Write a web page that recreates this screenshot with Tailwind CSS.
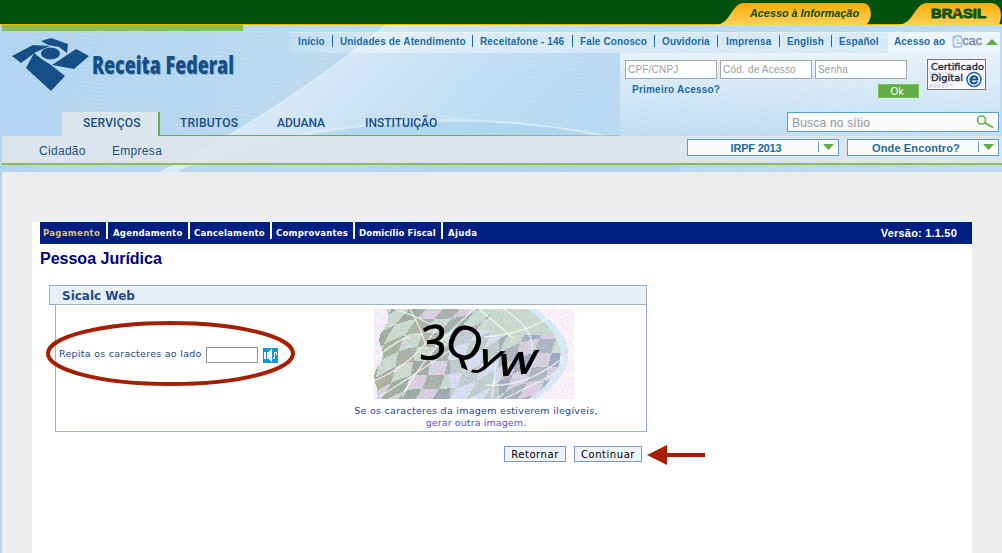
<!DOCTYPE html>
<html lang="pt-BR">
<head>
<meta charset="utf-8">
<title>Receita Federal - Sicalc Web</title>
<script src="https://cdn.jsdelivr.net/npm/@tailwindcss/browser@4"></script>
</head>
<body class="w-[1002px] h-[553px] overflow-hidden bg-[#b6d7ef] font-['Liberation_Sans',Arial,sans-serif]">
<div class="relative isolate flex flex-col w-[1002px] h-[553px]">

<!-- sky background with light curves -->
<svg class="absolute left-0 top-[25px] -z-10" width="1002" height="528" viewBox="0 25 1002 528">
  <defs>
    <linearGradient id="sky" x1="0" x2="1" y1="0" y2="0"><stop offset="0" stop-color="#b0d4f0"/><stop offset=".3" stop-color="#bad9f0"/><stop offset=".55" stop-color="#b6d8f0"/><stop offset="1" stop-color="#bcdaf1"/></linearGradient>
    <linearGradient id="ray" gradientUnits="userSpaceOnUse" x1="270" y1="100" x2="420" y2="260"><stop offset="0" stop-color="#fff" stop-opacity=".42"/><stop offset=".5" stop-color="#fff" stop-opacity=".16"/><stop offset="1" stop-color="#fff" stop-opacity="0"/></linearGradient>
    <pattern id="wave" width="40" height="4" patternUnits="userSpaceOnUse" patternTransform="rotate(6)"><path d="M0 1H40" stroke="#fff" stroke-opacity=".1"/></pattern>
  </defs>
  <rect y="25" width="1002" height="528" fill="url(#sky)"/>
  <rect y="25" width="1002" height="147" fill="url(#wave)"/>
  <path d="M161 172C250 128 330 72 386 25H700V172Z" fill="url(#ray)"/>
  <path d="M161 172C250 128 330 72 386 25" stroke="#e6f3fc" stroke-width="1.500" stroke-opacity=".7" fill="none"/>
  <path d="M165 172C270 130 400 118 480 121C560 124 620 138 680 155" stroke="#dceefa" stroke-width="2.500" stroke-opacity=".7" fill="none"/>
  <path d="M180 170C270 132 400 120 480 122C560 125 620 139 680 156V172H180Z" fill="#add3ee" fill-opacity=".7"/>
</svg>

<div class="flex justify-end h-[25px] bg-[#00520e] border-b border-[#fdb30a]">
  <svg width="290" height="25" viewBox="712 0 290 25">
    <defs><linearGradient id="gold" x1="0" x2="0" y1="0" y2="1"><stop offset="0" stop-color="#fdac04"/><stop offset="1" stop-color="#ffd05a"/></linearGradient></defs>
    <path d="M716 25C728 23 729 14 735 8C739 3 742 3 746 3H862C873 3 873 19 866 25Z" fill="url(#gold)"/>
    <path d="M898 25C911 23 912 14 918 8C922 3 925 3 929 3H990C1003 3 1002 17 999 25Z" fill="url(#gold)"/>
    <text x="750" y="17" textLength="109" lengthAdjust="spacingAndGlyphs" font-size="11.5" font-weight="bold" font-style="italic" fill="#0b4a10">Acesso à Informação</text>
    <text x="931" y="18.3" textLength="55" lengthAdjust="spacingAndGlyphs" font-size="13" font-weight="bold" fill="#0b5313" stroke="#0b5313" stroke-width=".9">BRASIL</text>
    <circle cx="957" cy="12.500" r="2" fill="#d8661e"/>
  </svg>
</div>

<header class="flex flex-col h-[147px] pl-[2px]">
  <div class="flex justify-between h-[28px] pr-[2px]">
    <div class="w-[241px] h-[6px] bg-[#8abd4c]"></div>
    <nav class="flex mt-[7px] h-[21px] pt-[2px] bg-linear-to-r from-white/10 via-white/40 via-15% to-white/45 border-t border-white/30 text-[10px] leading-[13px] tracking-[0.12px] font-bold text-[#1c6ca3] whitespace-nowrap">
      <span class="w-[42px] h-[12px] pl-[8px]">Início</span>
      <span class="w-[140px] h-[12px] border-l border-[#1c6ca3] pl-[7px]">Unidades de Atendimento</span>
      <span class="w-[100px] h-[12px] border-l border-[#1c6ca3] pl-[7px]">Receitafone - 146</span>
      <span class="w-[82px] h-[12px] border-l border-[#1c6ca3] pl-[7px]">Fale Conosco</span>
      <span class="w-[63px] h-[12px] border-l border-[#1c6ca3] pl-[7px]">Ouvidoria</span>
      <span class="w-[62px] h-[12px] border-l border-[#1c6ca3] pl-[8px]">Imprensa</span>
      <span class="w-[52px] h-[12px] border-l border-[#1c6ca3] pl-[7px]">English</span>
      <span class="w-[57px] h-[12px] border-l border-[#1c6ca3] pl-[7px]">Español</span>
      <span class="flex -mt-[3px] pt-[3px] w-[112px] h-[21px] bg-[#edf5fc] pl-[6px] gap-[7px]">Acesso ao
        <svg class="overflow-visible" width="48" height="14" viewBox="0 0 48 14"><rect x=".5" y="0" width="10" height="13" rx="3" fill="#a7cce8"/><path d="M3 6.500H8.500C8.500 2 3.500 1.500 3 6.500C2.700 11 7 11 8.500 9.500" fill="none" stroke="#fff" stroke-width="1.500"/><text x="10.500" y="10" font-size="12.500" font-weight="normal" letter-spacing="0" textLength="19.500" lengthAdjust="spacingAndGlyphs" fill="#7c8794" stroke="#7c8794" stroke-width=".4">cac</text><path d="M34 10L40 4L46 10Z" fill="#61ad43"/></svg>
      </span>
    </nav>
  </div>

  <div class="flex h-[83px]">
    <div class="flex flex-col w-[618px]">
      <svg class="-mt-[16px] shrink-0 overflow-visible" width="260" height="75" viewBox="2 37 260 75">
        <g fill="#164f86"><path d="M12 56L33 45L50 46L36 52L21 63Z"/><path d="M41 41L51 38L68 44L67 53L59 47L48 45Z"/><ellipse cx="50.500" cy="53.500" rx="9.500" ry="6"/><path d="M34 53L43 60L51 65L65 76L51 91L26 68Z"/><path d="M52 65L76 49L89 56L74 69Z"/></g>
        <text x="93" y="75" font-family="Open Sans" font-size="24.500" font-weight="800" textLength="142" lengthAdjust="spacingAndGlyphs" fill="#164f86" fill-opacity=".3">Receita Federal</text>
        <text x="92" y="74" font-family="Open Sans" font-size="24.500" font-weight="800" textLength="142" lengthAdjust="spacingAndGlyphs" fill="#164f86">Receita Federal</text>
      </svg>
      <div class="flex h-[24px] pl-[60px] font-['Roboto',sans-serif] text-[12px] leading-[22px] tracking-[0.22px] font-medium text-[#164f86] whitespace-nowrap">
        <span class="w-[98px] pl-[21px] bg-[#dde5ec] border-r-2 border-[#65ad45]">SERVIÇOS</span>
        <div class="flex flex-1 relative">
          <span class="w-[97px] pl-[20px]">TRIBUTOS</span><span class="w-[88px] pl-[20px] tracking-normal">ADUANA</span><span class="pl-[20px] tracking-normal">INSTITUIÇÃO</span>
          <div class="absolute bottom-0 left-0 w-full h-px bg-linear-to-r from-[#65ad45] from-60% to-[#65ad45]/30"></div>
        </div>
      </div>
    </div>
    <div class="flex flex-col w-[380px] h-[83px] bg-linear-to-b from-white/65 to-white/10 pl-[5px] pr-[1px]">
      <div class="flex h-[59px]">
        <div class="w-[294px] pt-[7px]">
          <div class="flex gap-[3px] text-[10px] leading-[18px] tracking-[0.2px] text-[#a0a0a0]">
            <span class="w-[92px] h-[19px] bg-white/90 border border-[#a8a8a8] pl-[2px]">CPF/CNPJ</span>
            <span class="w-[92px] h-[19px] bg-white/90 border border-[#a8a8a8] pl-[2px]">Cód. de Acesso</span>
            <span class="w-[92px] h-[19px] bg-white/90 border border-[#a8a8a8] pl-[2px]">Senha</span>
          </div>
          <div class="flex justify-between text-[10px] pl-[7px]">
            <span class="pt-[4px] leading-[14px] tracking-[0.22px] font-bold text-[#1c6ca3]">Primeiro Acesso?</span>
            <span class="mt-[5px] w-[41px] h-[14px] bg-[#61ad43] border border-[#72c656] pr-[3px] text-center leading-[13px] text-white">Ok</span>
          </div>
        </div>
        <svg class="mt-[6px] ml-[8px]" width="59" height="31" viewBox="0 0 59 31"><rect x=".5" y=".5" width="58" height="30" fill="#f7f7fc" stroke="#737782"/><path d="M2 14H24M2 18H12M3 26H26M2 28H20" stroke="#b9bdf0" stroke-dasharray="3 1"/><text x="4" y="10.500" font-family="DejaVu Sans" font-size="9.500" textLength="53" lengthAdjust="spacingAndGlyphs" fill="#2b3145" stroke="#2b3145" stroke-width=".4">Certificado</text><text x="4" y="22" font-family="DejaVu Sans" font-size="9.500" textLength="32" lengthAdjust="spacingAndGlyphs" fill="#2b3145" stroke="#2b3145" stroke-width=".4">Digital</text><circle cx="47" cy="20.500" r="7" fill="#fff" stroke="#1468b4" stroke-width="1.500"/><path d="M43.500 20.500H50.500C50 16 44.500 16 43.500 20.500C43 25 48 25.500 50.500 22.500" fill="none" stroke="#1b4f98" stroke-width="2"/></svg>
      </div>
      <div class="flex justify-between ml-[162px] w-[212px] h-[20px] bg-[#f8fafc] border border-[#589fd0] pl-[4px] pr-[4px] text-[12px] leading-[20px] tracking-[0.2px] text-[#999]">
        <span>Busca no sítio</span>
        <svg class="mt-[2px]" width="18" height="15" viewBox="0 0 18 15"><circle cx="5.500" cy="5" r="4" fill="none" stroke="#67ad4d" stroke-width="1.600"/><path d="M8.500 7.500L17 12.500" stroke="#67ad4d" stroke-width="2"/></svg>
      </div>
    </div>
  </div>

  <div class="flex items-start h-[29px] bg-[#e0e7ed]/90 border-b-2 border-[#8abd4c] text-[12px] tracking-[0.3px] text-[#164f86]">
    <span class="w-[110px] pl-[37px] pt-[8px] leading-[14px]">Cidadão</span>
    <span class="w-[575px] pt-[8px] leading-[14px]">Empresa</span>
    <div class="flex gap-[8px] pt-[3px] text-[11px] leading-[16px] tracking-normal font-bold text-[#1c6ca3]">
      <div class="flex w-[152px] h-[17px] bg-[#f8fafc] border border-[#589fd0]"><span class="w-[130px] pl-[6px] text-center tracking-[-0.2px]">IRPF 2013</span><svg width="20" height="15" viewBox="0 0 20 15"><path d="M.5 2V12" stroke="#589fd0"/><path d="M5 4H16L10.500 10Z" fill="#61ad43"/></svg></div>
      <div class="flex w-[152px] h-[17px] bg-[#f8fafc] border border-[#589fd0]"><span class="w-[130px] pl-[6px] text-center tracking-[0.12px]">Onde Encontro?</span><svg width="20" height="15" viewBox="0 0 20 15"><path d="M.5 2V12" stroke="#589fd0"/><path d="M5 4H16L10.500 10Z" fill="#61ad43"/></svg></div>
    </div>
  </div>
</header>

<main class="flex-1 ml-[2px] pt-[50px] pl-[30px] pr-[30px] bg-[#ebedee]">
  <div class="h-[331px] bg-white pl-[8px]">
    <div class="flex h-[22px] bg-[#001f82] font-['DejaVu_Sans_Condensed','DejaVu_Sans',sans-serif] text-[9.5px] leading-[21px] tracking-[0.2px] font-bold text-white whitespace-nowrap">
      <span class="w-[66px] h-[17px] pl-[3px] tracking-[0.3px] text-[#dcc07e]">Pagamento</span>
      <span class="w-[82px] h-[17px] border-l-2 border-white pl-[5px]">Agendamento</span>
      <span class="w-[82px] h-[17px] border-l-2 border-white pl-[4px]">Cancelamento</span>
      <span class="w-[83px] h-[17px] border-l-2 border-white pl-[4px]">Comprovantes</span>
      <span class="w-[88px] h-[17px] border-l-2 border-white pl-[4px] tracking-[0.1px]">Domicílio Fiscal</span>
      <span class="flex-1 h-[17px] border-l-2 border-white pl-[5px] tracking-[0.4px]">Ajuda</span>
      <span class="pr-[15px] leading-[22px] font-['Liberation_Sans',sans-serif] text-[11px]">Versão: 1.1.50</span>
    </div>
    <h1 class="pt-[5px] text-[16px] leading-[20px] font-bold text-[#000080]">Pessoa Jurídica</h1>
    <section class="mt-[16px] ml-[9px] w-[598px]">
      <h2 class="h-[20px] bg-[#e7eff6] border border-[#9fb1c9] pl-[12px] font-['DejaVu_Sans',sans-serif] text-[12px] leading-[21px] font-bold text-[#26478d]">Sicalc Web</h2>
      <div class="flex ml-[6px] h-[127px] border border-t-0 border-[#9fb1c9] font-['DejaVu_Sans',sans-serif] text-[9.5px] tracking-[0.27px] text-[#26478d]">
        <div class="flex w-[298px] pt-[42px] pl-[3px] whitespace-nowrap">
          <span class="w-[147px] leading-[14px]">Repita os caracteres ao lado</span>
          <span class="w-[52px] h-[16px] bg-white border border-[#969696]"></span>
          <svg class="mt-[1px] ml-[5px]" width="15" height="15" viewBox="0 0 15 15" shape-rendering="crispEdges"><rect width="15" height="15" fill="#1697dc"/><path d="M1 4H3V11H1ZM4 4H6L8 1H9V14H8L6 11H4ZM11 4H14V7H13V5H12V11H10V9H11Z" fill="#fff"/></svg>
        </div>
        <div class="flex flex-col items-center w-[244px] pt-[4px] text-center leading-[12px]">
          <div class="relative -ml-[5px] w-[200px] h-[90px]">
            <canvas id="mosaic" width="200" height="90"></canvas>
            <svg class="absolute inset-0" width="200" height="90" viewBox="0 0 200 90" font-family="Open Sans" letter-spacing="0" fill="#000" stroke="#000" stroke-width=".9">
              <text transform="translate(45 51) rotate(-4) skewX(-8) scale(1 1)" font-size="47">3</text>
              <text transform="translate(68 41) rotate(24) scale(1.02 1)" font-size="45">Q</text>
              <text transform="translate(101 56) rotate(6) skewX(-22) scale(1.2 .85)" font-size="36">y</text>
              <text transform="translate(122 68) rotate(-7) skewX(-20) scale(1.18 .95)" font-size="42">w</text>
            </svg>
          </div>
          <p class="mt-[6px] whitespace-nowrap">Se os caracteres da imagem estiverem ilegíveis,<br><span class="tracking-[0.1px] text-[#5555c0]">gerar outra imagem.</span></p>
        </div>
      </div>
    </section>
    <div class="flex gap-[8px] mt-[14px] ml-[464px] font-['DejaVu_Sans',sans-serif] text-[10px] leading-[15px] tracking-[0.55px] text-black">
      <button class="w-[62px] h-[16px] bg-[#eef3f8] border border-[#7a98c8]">Retornar</button>
      <button class="w-[68px] h-[16px] bg-[#eef3f8] border border-[#7a98c8]">Continuar</button>
    </div>
  </div>
</main>

<!-- annotations over the page -->
<svg class="absolute left-[46px] top-[320px]" width="660" height="146" viewBox="46 320 660 146">
  <ellipse cx="170.500" cy="353.500" rx="122.500" ry="30.500" fill="none" stroke="#a61e00" stroke-width="4"/>
  <path d="M647 455L667 445V453H705V457H667V465Z" fill="#a61e00"/>
</svg>
</div>
<script>
// dithered mosaic of warped tiles behind the characters
const ctx = document.getElementById('mosaic').getContext('2d');
const img = ctx.createImageData(200, 90);
let seed = 11;
const rnd = () => (seed = (seed * 1103515245 + 12345) & 0x7fffffff) / 0x7fffffff;
const hash = (a, b) => { const s = Math.sin(a * 127.1 + b * 311.7) * 43758.5; return s - Math.floor(s); };
for (let y = 0; y < 90; y++) for (let x = 0; x < 200; x++) {
  const u = (x + y * .55 + 6 * Math.sin(y / 17)) / 17;
  const v = (y + (x - 90) * .3 + 6 * Math.sin(x / 19)) / 14;
  const i = Math.floor(u), j = Math.floor(v), h = hash(i, j);
  const dark = (i + j) % 2 !== 0;
  const right = x / 200;
  let c = dark ? [158 + 18 * h, 170 + 12 * h, 158 + 45 * right] : (h > .5 ? [203, 217, 209] : [215, 207, 224]);
  if (x > 75 && x < 125 && y > 20) c = dark ? [190, 206, 205] : [217, 220, 242];
  if (x > 115 && y < 26) c = [200, 215, 206];
  const edge = 186 - Math.pow(y - 45, 2) / 62;
  if (x > edge) c = x < edge + 8 ? [215, 232, 248] : [250, 240, 250];
  if (x < 12 - y / 7 + 3 * Math.sin(y / 6)) c = [245, 238, 248];
  const o = (y * 200 + x) * 4;
  img.data[o] = c[0] + (rnd() - .5) * 34; img.data[o + 1] = c[1] + (rnd() - .5) * 26; img.data[o + 2] = c[2] + (rnd() - .5) * 34; img.data[o + 3] = 255;
}
ctx.putImageData(img, 0, 0);
ctx.strokeStyle = 'rgba(245,252,248,.8)';
ctx.lineWidth = 1.3;
[[0,72,40,55,62,20],[5,88,40,66,78,40],[20,0,55,10,80,34],[36,0,50,25,52,40],[28,88,50,45,100,0],[130,0,160,20,158,40],[110,28,150,25,176,8],[112,76,150,80,190,48],[118,90,120,70,122,55],[130,90,160,75,186,62],[105,0,135,25,140,30],[0,50,25,30,35,28]].forEach(p => {
  ctx.beginPath(); ctx.moveTo(p[0], p[1]); ctx.quadraticCurveTo(p[2], p[3], p[4], p[5]); ctx.stroke();
});
</script>
</body>
</html>
